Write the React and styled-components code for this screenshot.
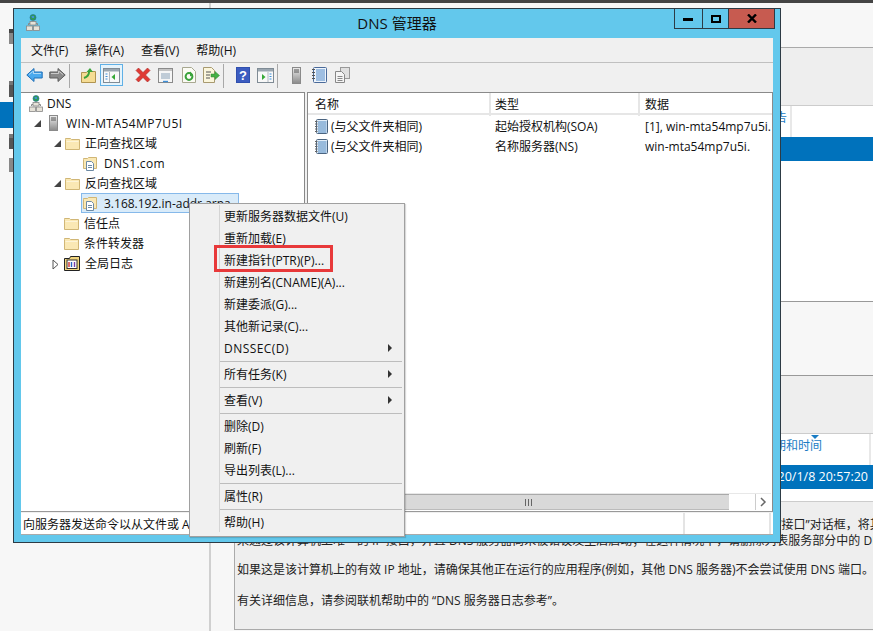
import React from "react";
import styled, { createGlobalStyle } from "styled-components";

const Global = createGlobalStyle`
  html, body { margin: 0; padding: 0; background: #f7f7f7; }
  body { font-family: "Open Sans", "Noto Sans CJK SC", sans-serif; font-size: 12px; color: #111; }
  * { box-sizing: border-box; }
`;

const Page = styled.div`
  position: relative; width: 873px; height: 631px; overflow: hidden;
  display: flex; flex-direction: column; background: #f7f7f7;
`;
const TopStrip = styled.div`height: 3px; background: #444; flex: none;`;
const Desk = styled.div`flex: 1; display: flex; min-height: 0;`;
const Nav = styled.nav`
  width: 209px; flex: none; padding: 26px 0 0 9px;
  display: flex; flex-direction: column; background: #f7f7f7;
`;
const NavTile = styled.div`
  width: ${p => p.$w || 6}px; height: ${p => p.$h}px; margin-left: ${p => p.$ml || 0}px;
  margin-top: ${p => p.$mt}px; background: ${p => p.$c}; border-top: 4px solid ${p => p.$top || p.$c};
`;
const Rule = styled.div`width: 2px; background: #d0d0d0; flex: none;`;
const Main = styled.main`flex: 1; min-width: 0; display: flex; flex-direction: column;`;
const Head = styled.div`height: 45px; flex: none; background: #f7f7f7; border-bottom: 1px solid #aaa;`;
const Band = styled.div`
  height: ${p => p.$h}px; flex: none; background: ${p => p.$bg};
  border-top: ${p => p.$edge ? `1px solid ${p.$edge}` : "none"};
`;
const EventTable = styled.section`
  height: ${p => p.$h}px; flex: none; background: #fff; border-top: 1px solid #ccc;
  border-bottom: 1px solid ${p => p.$edge};
`;
const EventHead = styled.div`
  position: relative; height: ${p => p.$h}px; color: #1a7cc4; text-align: right; white-space: nowrap;
  width: ${p => p.$w}px; padding-right: ${p => p.$pr}px; padding-top: ${p => p.$pt}px;
  line-height: 16px; border-right: 2px solid #e8e8e8;
`;
const SortCaret = styled.i`
  position: absolute; top: 1px; right: 50px; width: 0; height: 0;
  border-left: 4px solid transparent; border-right: 4px solid transparent; border-top: 4px solid #1a7cc4;
`;
const EventRow = styled.div`
  height: 24px; background: #0072bc; color: #fff; text-align: right; padding-right: 5px;
  line-height: 24px; font-size: 12.5px; white-space: nowrap;
`;
const Details = styled.section`flex: 1; min-height: 0; padding: 0 0 1px 23px; display: flex; background: #f7f7f7;`;
const DetailPanel = styled.div`
  flex: 1; min-width: 0; background: #eee; border-left: 1px solid #aaa; border-bottom: 1px solid #aaa;
  padding: 15px 0 0 2px; white-space: nowrap; overflow: hidden; line-height: 16px; color: #222;
`;
const Para = styled.p`margin: ${p => p.$mt || 0}px 0 0;`;

const Win = styled.div`
  position: absolute; left: 13px; top: 8px; width: 768px; height: 535px;
  border: 1px solid #2d3b45; background: #63c8ec; display: flex; flex-direction: column;
`;
const TitleBar = styled.header`
  height: 29px; flex: none; display: grid; grid-template-columns: 1fr auto 1fr;
`;
const TitleIcon = styled.div`padding: 5px 0 0 12px; display: flex;`;
const TitleText = styled.h1`
  margin: 0; font-size: 15px; font-weight: 400; line-height: 28px; color: #111;
`;
const Controls = styled.div`
  justify-self: end; display: flex; height: 21px; margin: -1px 5px 0 0;
`;
const Ctl = styled.div`
  width: ${p => p.$w}px; height: 21px; background: ${p => p.$bg || "transparent"};
  border: 1px solid #2d3b45; margin-left: -1px; display: flex; align-items: center; justify-content: center;
`;
const Client = styled.div`
  flex: 1; margin: 0 7px 7px; min-height: 0; background: #f0f0f0;
  display: flex; flex-direction: column; border-bottom: 1px solid #aaa;
`;
const MenuBar = styled.div`
  height: 25px; flex: none; display: flex; gap: 17px; padding: 0 0 0 10px;
  align-items: center; border-bottom: 1px solid #c0c0c0;
`;
const Toolbar = styled.div`height: 29px; flex: none; display: flex; padding: 1px 0 0 2px; align-items: flex-start;`;
const ToolBtn = styled.div`
  width: 23px; height: 22px; flex: none; display: flex; align-items: center; justify-content: center;
  margin-left: ${p => p.$ml || 0}px;
  ${p => p.$on ? "background:#e5f3fb;border:1px solid #5fb0e6;" : ""}
`;
const ToolSep = styled.div`width: 1px; height: 24px; margin: 0 7px 0 0; background: #a8a8a8; flex: none;`;
const Panes = styled.div`flex: 1; min-height: 0; display: flex; gap: 2px;`;
const TreePane = styled.div`
  width: 284px; flex: none; background: #fff; border-top: 1px solid #888; border-right: 1px solid #888;
  border-bottom: 1px solid #999;
`;
const TreeRow = styled.div`
  height: 20px; display: flex; align-items: center; padding-left: ${p => p.$x}px; white-space: nowrap;
  letter-spacing: ${p => p.$ls || 0}px;
`;
const Exp = styled.span`width: 9px; height: 9px; margin-right: ${p => p.$mr}px; flex: none; display: flex;`;
const IconSlot = styled.span`display: flex; flex: none; margin-right: ${p => p.$mr}px;`;
const Selected = styled.span`
  display: flex; align-items: center; height: 20px; width: 158px; padding-left: 1px; margin-left: -2px;
  background: #d9ebf9; border: 1px solid #86b9ea; overflow: hidden;
`;
const ListPane = styled.div`
  flex: 1; min-width: 0; background: #fff; border: 1px solid #8a8a8a; border-bottom-color: #999;
  display: flex; flex-direction: column; overflow: hidden;
`;
const ListHead = styled.div`
  height: 22px; flex: none; display: grid; grid-template-columns: 181px 149px 1fr;
  border-bottom: 2px solid #e6e6e6; line-height: 23px;
`;
const HeadCell = styled.div`padding-left: ${p => p.$pl}px; border-left: ${p => p.$div ? "2px solid #e6e6e6" : "none"};`;
const ListBody = styled.div`flex: 1; padding-top: 1px;`;
const ListRow = styled.div`
  height: 20px; display: grid; grid-template-columns: 181px 149px 1fr; align-items: center; white-space: nowrap;
`;
const ListCell = styled.div`
  display: flex; align-items: center; padding-left: ${p => p.$pl}px; overflow: hidden; gap: 3px;
`;
const HScroll = styled.div`
  height: 17px; flex: none; margin: 0 1px 1px 0; display: flex; border-top: 1px solid #e8e8e8;
`;
const ScrollThumb = styled.div`
  flex: 1; background: #d9d9d9; border-bottom: 1px solid #bbb; border-top: 1px solid #aaa; margin-left: 20px;
  display: flex; align-items: center; justify-content: center;
`;
const ScrollGap = styled.div`width: 26px; background: #fff;`;
const ScrollBtn = styled.div`
  width: 16px; background: #fff; border-left: 1px solid #ccc; display: flex; align-items: center; justify-content: center;
`;
const StatusBar = styled.div`
  height: 21px; margin-top: 1px; flex: none; display: flex; background: #fff; line-height: 23px; white-space: nowrap;
`;
const StatusCell = styled.div`
  width: ${p => p.$w}px; flex: ${p => p.$w ? "none" : 1}; padding-left: 2px; overflow: hidden;
  border-right: 2px solid #e4e4e4;
`;

const Menu = styled.div`
  position: absolute; left: 189px; top: 203px; width: 216px; height: 334px;
  background: #f0f0f0; border: 1px solid #a0a0a0; padding: 1px 2px 0 29px;
  box-shadow: 1px 1px 1px rgba(0,0,0,.15);
  &::before { content: ""; position: absolute; left: 29px; top: 1px; bottom: 4px; width: 1px; background: #d4d4d4; }
`;
const Item = styled.div`
  position: relative; height: 22px; line-height: 24px; padding-left: 5px; white-space: nowrap;
  letter-spacing: ${p => p.$ls || 0}px;
  ${p => p.$mark ? `&::after{content:"";position:absolute;box-sizing:border-box;left:-5px;top:-4px;width:119px;height:27px;border:3px solid #e8393a;}` : ""}
`;
const Tri = styled.i`
  position: absolute; right: 10px; top: 7px; width: 0; height: 0;
  border-top: 4px solid transparent; border-bottom: 4px solid transparent; border-left: 4px solid #333;
`;
const Sep = styled.div`height: 4px; padding-top: 2px; &::after { content: ""; display: block; height: 1px; background: #bdbdbd; }`;

const Net = ({ s = 1 }) => (
  <svg width={14 * s} height={17 * s} viewBox="0 0 14 17">
    <circle cx="7" cy="3.5" r="3" fill="#2f9a5a" stroke="#1f6f8f" strokeWidth=".6" />
    <path d="M5.5 2h2.5v2h-2z" fill="#3d8fd8" />
    <path d="M7 6.5v3M2.5 11V9.5h9V11" fill="none" stroke="#888" />
    <rect x="4" y="7.5" width="6" height="3.5" fill="#e6e2d8" stroke="#888" strokeWidth=".8" />
    <rect x=".5" y="12" width="6" height="4.5" fill="#e6e2d8" stroke="#888" strokeWidth=".8" />
    <rect x="7.5" y="12" width="6" height="4.5" fill="#e6e2d8" stroke="#888" strokeWidth=".8" />
  </svg>
);
const Server = () => (
  <svg width="9" height="16" viewBox="0 0 9 16">
    <defs><linearGradient id="srv" x1="0" x2="0" y1="0" y2="1"><stop offset="0" stopColor="#efefef" /><stop offset="1" stopColor="#8a8a8a" /></linearGradient></defs>
    <rect x=".5" y=".5" width="8" height="15" fill="url(#srv)" stroke="#8a8a8a" />
    <path d="M2 3h5M2 5h5" stroke="#555" />
  </svg>
);
const Folder = () => (
  <svg width="15" height="13" viewBox="0 0 15 13">
    <path d="M.5 2.5V1.5h5l1 1h8v10H.5z" fill="#fae8b4" stroke="#d0b676" />
    <path d="M1.5 4.5h12" stroke="#fdf4d8" />
  </svg>
);
const Zone = () => (
  <svg width="15" height="15" viewBox="0 0 15 15">
    <path d="M.5 3.5V2.5h4l1-1h8v11H.5z" fill="#fae8b4" stroke="#d0b676" />
    <path d="M3.5 5.5h5l2 2v7h-7z" fill="#fff" stroke="#6d8aa4" />
    <path d="M5 9.5h4M5 11.5h4" stroke="#6d8aa4" />
  </svg>
);
const LogFolder = () => (
  <svg width="16" height="15" viewBox="0 0 16 15">
    <path d="M.5 2.5h5l1-2h9v14H.5z" fill="#f2d67e" stroke="#222" />
    <rect x="3" y="4" width="10" height="8.5" fill="#fff" stroke="#333" />
    <path d="M5 6v5" stroke="#d03030" strokeWidth="1.4" /><path d="M7.5 6v5" stroke="#2a62c0" strokeWidth="1.4" /><path d="M10.5 6v5" stroke="#7a3ea8" strokeWidth="1.4" />
  </svg>
);
const Record = () => (
  <svg width="13" height="15" viewBox="0 0 13 15">
    <rect x="1.5" y=".5" width="11" height="14" rx="1" fill="#e2edf8" stroke="#4a6480" />
    <path d="M3 3h8.5M3 5h8.5M3 7h8.5M3 9h8.5M3 11h8.5M3 13h8.5" stroke="#4f88c0" />
    <path d="M0 2.5h2.5M0 5h2.5M0 7.5h2.5M0 10h2.5M0 12.5h2.5" stroke="#666" />
  </svg>
);
const Arrow = ({ left, fill, edge }) => (
  <svg width="17" height="16" viewBox="0 0 17 16">
    <g transform={left ? "" : "translate(17 0) scale(-1 1)"}>
      <path d="M.8 8 8 1.5V5h8.2v6H8v3.5z" fill={fill} stroke={edge} />
      <path d="M3 7.5 7.5 4v2.5h7.5" fill="none" stroke="#fff" strokeOpacity=".55" />
    </g>
  </svg>
);
const FolderUp = () => (
  <svg width="15" height="16" viewBox="0 0 15 16">
    <path d="M.5 5.5h5l1-1h8v11H.5z" fill="#f5dc94" stroke="#b09450" />
    <path d="M3 11c3-1 5-3 5-6" fill="none" stroke="#3aa23a" strokeWidth="2" />
    <path d="M5.5 5 9 1l3 4z" fill="#3aa23a" />
  </svg>
);
const Wnd = ({ bullets }) => (
  <svg width="17" height="15" viewBox="0 0 17 15">
    <rect x=".5" y=".5" width="16" height="14" fill="#f8f8f8" stroke="#7f8b95" />
    <rect x="1" y="1" width="15" height="2.5" fill="#9aa6b0" />
    {bullets === "left" ? (
      <>
        <path d="M2.5 6h2M2.5 8.5h2M2.5 11h2" stroke="#3d8fd8" />
        <path d="M6.5 4v10" stroke="#b0b8c0" />
        <path d="M12 6v6L8.5 9z" fill="#36a836" />
      </>
    ) : (
      <>
        <path d="M5 6v6L8.5 9z" fill="#36a836" />
        <path d="M11 4v10" stroke="#b0b8c0" />
        <path d="M12.5 6h2M12.5 8.5h2M12.5 11h2" stroke="#3d8fd8" />
      </>
    )}
  </svg>
);
const Cross = () => (
  <svg width="16" height="16" viewBox="0 0 16 16">
    <path d="M1 3.5 3.5 1 8 5.5 12.5 1 15 3.5 10.5 8 15 12.5 12.5 15 8 10.5 3.5 15 1 12.5 5.5 8z" fill="#e03a34" stroke="#a82a26" strokeWidth=".6" />
  </svg>
);
const Props = () => (
  <svg width="15" height="15" viewBox="0 0 15 15">
    <rect x=".5" y=".5" width="14" height="14" fill="#f6f6f6" stroke="#8a8a8a" />
    <rect x="1" y="1" width="13" height="2" fill="#c4c4c4" />
    <path d="M3 6h9M3 8h9M3 10h9" stroke="#8aa2b8" />
    <path d="M5 13.5h5" stroke="#3d8fd8" strokeWidth="1.4" />
  </svg>
);
const Refresh = () => (
  <svg width="14" height="16" viewBox="0 0 14 16">
    <path d="M.5.5h9l4 4v11H.5z" fill="#fbfbf4" stroke="#a8a890" />
    <circle cx="7" cy="9.5" r="3.4" fill="none" stroke="#3aa23a" strokeWidth="2" />
    <path d="M8 4.5v5l3-2z" fill="#3aa23a" />
  </svg>
);
const Export = () => (
  <svg width="17" height="16" viewBox="0 0 17 16">
    <path d="M.5.5h8l3 3v12H.5z" fill="#fbf6dc" stroke="#a89a70" />
    <path d="M3 5h5M3 8h4M3 11h4" stroke="#555" />
    <path d="M8 7h4V4.5l4.5 4-4.5 4V10H8z" fill="#46b046" stroke="#2f8a2f" strokeWidth=".5" />
  </svg>
);
const Help = () => (
  <svg width="14" height="16" viewBox="0 0 14 16">
    <rect width="14" height="16" fill="#2f4fae" />
    <rect x="1" y="1" width="12" height="14" fill="#3c5cc0" />
    <text x="7" y="13" textAnchor="middle" fontFamily="Liberation Sans" fontWeight="700" fontSize="13" fill="#fff">?</text>
  </svg>
);
const Tower = () => (
  <svg width="9" height="17" viewBox="0 0 9 17">
    <defs><linearGradient id="twr" x1="0" x2="0" y1="0" y2="1"><stop offset="0" stopColor="#ececec" /><stop offset="1" stopColor="#8a8a8a" /></linearGradient></defs>
    <rect x=".5" y=".5" width="8" height="16" fill="url(#twr)" stroke="#8a8a8a" />
    <path d="M2 3h5M2 5h5" stroke="#555" />
  </svg>
);
const Notebook = () => (
  <svg width="15" height="16" viewBox="0 0 15 16">
    <rect x="1.5" y=".5" width="13" height="15" rx="1" fill="#eef4fb" stroke="#4a6a9a" />
    <path d="M4 3h9M4 5h9M4 7h9M4 9h9M4 11h9M4 13h9" stroke="#4f88c8" />
    <path d="M0 2.5h3M0 5.5h3M0 8.5h3M0 11.5h3" stroke="#555" />
  </svg>
);
const Copies = () => (
  <svg width="15" height="16" viewBox="0 0 15 16">
    <rect x="5.5" y=".5" width="9" height="11" fill="#e0e0e0" stroke="#999" />
    <path d="M.5 4.5h6l3 3v8h-9z" fill="#f5f5f5" stroke="#888" />
    <path d="M2.5 9.5h5M2.5 11.5h5M2.5 13.5h5" stroke="#888" />
  </svg>
);
const Open = () => <svg width="9" height="9" viewBox="0 0 9 9"><path d="M8 1v7H1z" fill="#444" /></svg>;
const Closed = () => <svg width="9" height="11" viewBox="0 0 9 11"><path d="M2 1l5 4.5L2 10z" fill="#fff" stroke="#555" /></svg>;

const tree = [
  { x: 8, label: "DNS", icon: <Net />, mr: 4 },
  { x: 12, label: "WIN-MTA54MP7U5I", icon: <Server />, mr: 8, exp: <Open />, gap: 7, ls: .45 },
  { x: 32, label: "正向查找区域", icon: <Folder />, mr: 5, exp: <Open />, gap: 3 },
  { x: 62, label: "DNS1.com", icon: <Zone />, mr: 6, ls: .3 },
  { x: 32, label: "反向查找区域", icon: <Folder />, mr: 5, exp: <Open />, gap: 3 },
  { x: 62, label: "3.168.192.in-addr.arpa", icon: <Zone />, mr: 6, sel: true },
  { x: 43, label: "信任点", icon: <Folder />, mr: 5 },
  { x: 43, label: "条件转发器", icon: <Folder />, mr: 5 },
  { x: 30, label: "全局日志", icon: <LogFolder />, mr: 5, exp: <Closed />, gap: 4 },
];

const menu = [
  { t: "更新服务器数据文件(U)" }, { t: "重新加载(E)" }, { t: "新建指针(PTR)(P)...", mark: true },
  { t: "新建别名(CNAME)(A)..." }, { t: "新建委派(G)..." }, { t: "其他新记录(C)..." }, { t: "DNSSEC(D)", sub: true, ls: .45 }, { sep: true },
  { t: "所有任务(K)", sub: true }, { sep: true }, { t: "查看(V)", sub: true }, { sep: true },
  { t: "删除(D)" }, { t: "刷新(F)" }, { t: "导出列表(L)..." }, { sep: true }, { t: "属性(R)" }, { sep: true }, { t: "帮助(H)" },
];

const records = [
  ["(与父文件夹相同)", "起始授权机构(SOA)", "[1], win-mta54mp7u5i."],
  ["(与父文件夹相同)", "名称服务器(NS)", "win-mta54mp7u5i."],
];

export default function App() {
  return (
    <Page>
      <Global />
      <TopStrip />
      <Desk>
        <Nav>
          <NavTile $h={15} $mt={0} $c="#888" $top="#444" />
          <NavTile $h={16} $mt={37} $c="#555" $top="#777" />
          <NavTile $w={15} $ml={-9} $h={26} $mt={5} $c="#0072bc" />
          <NavTile $h={15} $mt={6} $c="#555" $top="#777" />
          <NavTile $h={14} $mt={9} $c="#888" />
        </Nav>
        <Rule />
        <Main>
          <Head />
          <Band $h={57} $bg="#eee" />
          <EventTable $h={197} $edge="#999">
            <EventHead $w={581} $h={31} $pr={3} $pt={4}>警告</EventHead>
            <EventRow />
          </EventTable>
          <Band $h={73} $bg="#f7f7f7" />
          <Band $h={58} $bg="#eee" $edge="#999" />
          <EventTable $h={69} $edge="#ccc">
            <EventHead $w={660} $h={31} $pr={47} $pt={4}>日期和时间<SortCaret /></EventHead>
            <EventRow>2020/1/8 20:57:20</EventRow>
          </EventTable>
          <Details>
            <DetailPanel>
              <Para>DNS服务器无法打开套接字。请确认该地址是此计算机上的有效接口地址；如果不是，请使用此属性的“接口”对话框，将其从列表中删除</Para>
              <Para>来通过该计算机上唯一的 IP 接口，并且 DNS 服务器尚未被错误发生后启动；在这种情况下，请删除列表服务部分中的 DNS</Para>
              <Para $mt={13}>如果这是该计算机上的有效 IP 地址，请确保其他正在运行的应用程序(例如，其他 DNS 服务器)不会尝试使用 DNS 端口。</Para>
              <Para $mt={15}>有关详细信息，请参阅联机帮助中的 “DNS 服务器日志参考”。</Para>
            </DetailPanel>
          </Details>
        </Main>
      </Desk>

      <Win>
        <TitleBar>
          <TitleIcon><Net /></TitleIcon>
          <TitleText>DNS 管理器</TitleText>
          <Controls>
            <Ctl $w={29}><svg width="11" height="4"><rect width="10" height="3" y="1" fill="#000" /></svg></Ctl>
            <Ctl $w={27}><svg width="10" height="8"><rect x="1" y="1" width="8" height="6" fill="none" stroke="#000" strokeWidth="2" /></svg></Ctl>
            <Ctl $w={47} $bg="#c75b50"><svg width="10" height="9" viewBox="0 0 10 9"><path d="M1 .5 9 8.5M9 .5 1 8.5" stroke="#000" strokeWidth="2.4" /></svg></Ctl>
          </Controls>
        </TitleBar>
        <Client>
          <MenuBar>
            <span>文件(F)</span><span>操作(A)</span><span>查看(V)</span><span>帮助(H)</span>
          </MenuBar>
          <Toolbar>
            <ToolBtn><Arrow left fill="#4ba9ee" edge="#2070b8" /></ToolBtn>
            <ToolBtn><Arrow fill="#8a8a8a" edge="#5c5c5c" /></ToolBtn>
            <ToolSep />
            <ToolBtn><FolderUp /></ToolBtn>
            <ToolBtn $on><Wnd bullets="left" /></ToolBtn>
            <ToolBtn $ml={8}><Cross /></ToolBtn>
            <ToolBtn><Props /></ToolBtn>
            <ToolBtn><Refresh /></ToolBtn>
            <ToolBtn><Export /></ToolBtn>
            <ToolSep />
            <ToolBtn><Help /></ToolBtn>
            <ToolBtn><Wnd bullets="right" /></ToolBtn>
            <ToolSep />
            <ToolBtn><Tower /></ToolBtn>
            <ToolBtn><Notebook /></ToolBtn>
            <ToolBtn><Copies /></ToolBtn>
          </Toolbar>
          <Panes>
            <TreePane>
              {tree.map(r => (
                <TreeRow key={r.label} $x={r.x} $ls={r.ls}>
                  {r.exp && <Exp $mr={r.gap}>{r.exp}</Exp>}
                  {r.sel ? (
                    <Selected>
                      <IconSlot $mr={r.mr}>{r.icon}</IconSlot>
                      {r.label}
                    </Selected>
                  ) : (
                    <>
                      <IconSlot $mr={r.mr}>{r.icon}</IconSlot>
                      {r.label}
                    </>
                  )}
                </TreeRow>
              ))}
            </TreePane>
            <ListPane>
              <ListHead>
                <HeadCell $pl={7}>名称</HeadCell>
                <HeadCell $pl={4} $div>类型</HeadCell>
                <HeadCell $pl={5} $div>数据</HeadCell>
              </ListHead>
              <ListBody>
                {records.map(r => (
                  <ListRow key={r[1]}>
                    <ListCell $pl={7}><Record />{r[0]}</ListCell>
                    <ListCell $pl={6}>{r[1]}</ListCell>
                    <ListCell $pl={7}>{r[2]}</ListCell>
                  </ListRow>
                ))}
              </ListBody>
              <HScroll>
                <ScrollThumb><svg width="8" height="7"><path d="M.5 0v7M3.5 0v7M6.5 0v7" stroke="#666" /></svg></ScrollThumb>
                <ScrollGap />
                <ScrollBtn><svg width="7" height="10"><path d="M1 1l4 4-4 4" fill="none" stroke="#666" strokeWidth="1.5" /></svg></ScrollBtn>
              </HScroll>
            </ListPane>
          </Panes>
          <StatusBar>
            <StatusCell $w={664}>向服务器发送命令以从文件或 Active Directory 加载</StatusCell>
            <StatusCell $w={86} />
          </StatusBar>
        </Client>
      </Win>

      <Menu>
        {menu.map((m, i) => m.sep ? <Sep key={i} /> : (
          <Item key={i} $mark={m.mark} $ls={m.ls}>{m.t}{m.sub && <Tri />}</Item>
        ))}
      </Menu>
    </Page>
  );
}
